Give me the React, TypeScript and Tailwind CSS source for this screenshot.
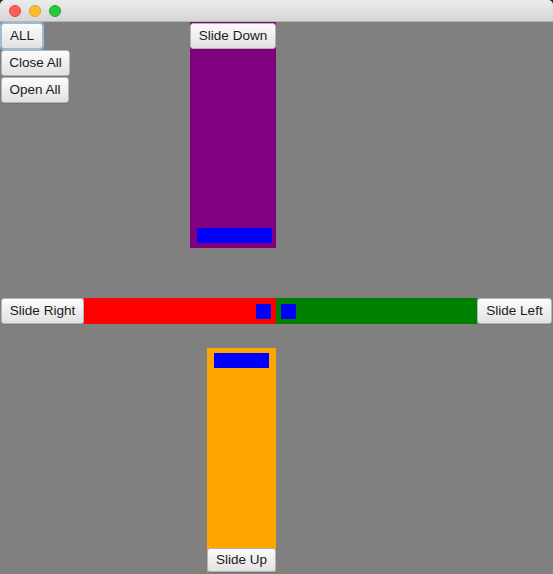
const base =
  "px-[8px] flex items-center justify-center rounded-[3px] border border-[#b4b4b4] bg-gradient-to-b from-[#fcfcfc] to-[#e2e2e2] text-[13.5px] text-[#1a1a1a] shadow-[0_1px_0_rgba(0,0,0,0.08)] whitespace-nowrap";
const btn = base + " h-[26px]";

function TrafficLights() {
  return (
    <div className="flex items-center gap-[8px] pl-[9px] h-full">
      <span className="w-[12px] h-[12px] rounded-full bg-[#fc5f57] border border-[#e0443e]" />
      <span className="w-[12px] h-[12px] rounded-full bg-[#fdbc2e] border border-[#dea123]" />
      <span className="w-[12px] h-[12px] rounded-full bg-[#28c840] border border-[#1aab29]" />
    </div>
  );
}

export default function App() {
  return (
    <div
      className="w-[553px] h-[574px] bg-[#1c2a2e] overflow-hidden"
      style={{ fontFamily: '"Liberation Sans", Arial, sans-serif' }}
    >
      <div className="w-full h-full flex flex-col rounded-t-[5px] overflow-hidden bg-[#808080]">
        {/* title bar */}
        <div className="h-[22px] shrink-0 bg-gradient-to-b from-[#ececec] to-[#d6d6d6] border-b border-[#b5b5b5]">
          <TrafficLights />
        </div>

        {/* top: buttons + purple panel */}
        <div className="flex h-[226px] shrink-0">
          <div className="w-[190px] flex flex-col items-start pt-px pl-px gap-px">
            <button className={btn + " w-[42px] border-[#3a9be0] ring-1 ring-[#86c3ee]"}>ALL</button>
            <button className={btn + " w-[69px]"}>Close All</button>
            <button className={btn + " w-[68px]"}>Open All</button>
          </div>
          <div className="w-[86px] bg-[#800080] flex flex-col justify-between">
            <button className={btn + " w-full mt-px"}>Slide Down</button>
            <div className="ml-[7px] mb-[5px] w-[75px] h-[15px] bg-[#0000ff]" />
          </div>
        </div>

        {/* middle row */}
        <div className="flex h-[26px] mt-[50px] shrink-0">
          <button className={btn + " w-[83px] ml-px"}>Slide Right</button>
          <div className="w-[192px] bg-[#ff0000] flex items-center justify-end pr-[5px]">
            <div className="w-[15px] h-[15px] bg-[#0000ff]" />
          </div>
          <div className="w-[201px] bg-[#008000] flex items-center pl-[5px]">
            <div className="w-[15px] h-[15px] bg-[#0000ff]" />
          </div>
          <button className={btn + " w-[75px]"}>Slide Left</button>
        </div>

        {/* bottom: orange panel */}
        <div className="flex-1 flex mt-[24px] mb-[2px]">
          <div className="ml-[207px] w-[69px] bg-[#ffa500] flex flex-col justify-between">
            <div className="ml-[7px] mt-[5px] w-[55px] h-[15px] bg-[#0000ff]" />
            <button className={base + " w-full h-[24px]"}>Slide Up</button>
          </div>
        </div>
      </div>
    </div>
  );
}
